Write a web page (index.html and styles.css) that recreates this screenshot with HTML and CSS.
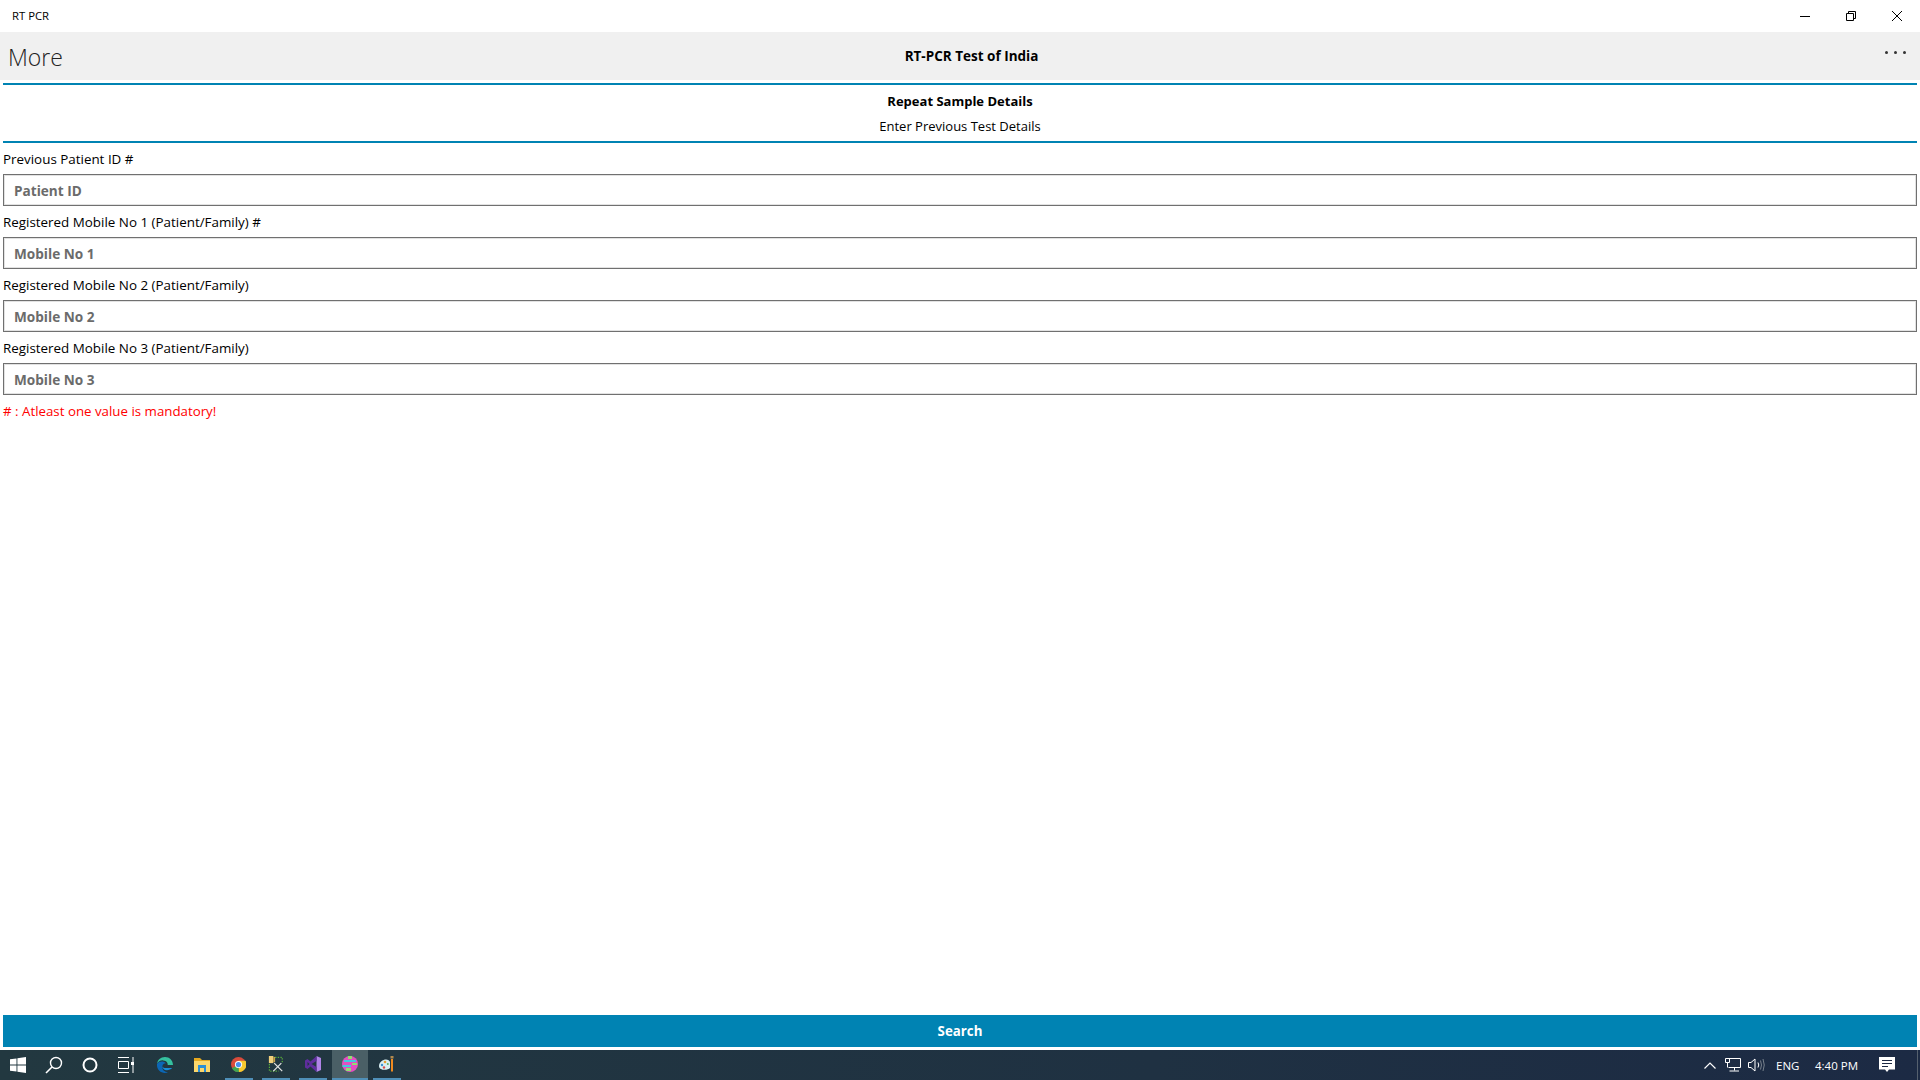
FILE: index.html
```html
<!DOCTYPE html>
<html lang="en">
<head>
    <meta charset="UTF-8">
    <title>RT PCR</title>
    <link rel="stylesheet" href="styles.css">
</head>
<body>
    <div class="window">
        <div class="title-bar">
            <span class="app-name">RT PCR</span>
            <div class="window-controls">
                <div class="window-btn">
                    <svg width="10" height="10" viewBox="0 0 10 10"><path d="M0 5.5H10" stroke="#000" fill="none"/></svg>
                </div>
                <div class="window-btn">
                    <svg width="10" height="10" viewBox="0 0 10 10"><path d="M.5 2.5H7.5V9.5H.5ZM2.5 2.5V.5H9.5V7.5H7.5" stroke="#000" fill="none"/></svg>
                </div>
                <div class="window-btn">
                    <svg width="10" height="10" viewBox="0 0 10 10"><path d="M0 0L10 10M10 0L0 10" stroke="#000" fill="none"/></svg>
                </div>
            </div>
        </div>

        <div class="command-bar">
            <div class="page-name">More</div>
            <div class="app-title">RT-PCR Test of India</div>
            <div class="more-dots"><i></i><i></i><i></i></div>
        </div>

        <div class="content">
            <div class="section-head">
                <div class="section-title">Repeat Sample Details</div>
                <div class="section-sub">Enter Previous Test Details</div>
            </div>

            <div class="form-group">
                <label for="patientId">Previous Patient ID #</label>
                <input type="text" id="patientId" placeholder="Patient ID">
            </div>
            <div class="form-group">
                <label for="mobile1">Registered Mobile No 1 (Patient/Family) #</label>
                <input type="text" id="mobile1" placeholder="Mobile No 1">
            </div>
            <div class="form-group">
                <label for="mobile2">Registered Mobile No 2 (Patient/Family)</label>
                <input type="text" id="mobile2" placeholder="Mobile No 2">
            </div>
            <div class="form-group">
                <label for="mobile3">Registered Mobile No 3 (Patient/Family)</label>
                <input type="text" id="mobile3" placeholder="Mobile No 3">
            </div>
            <div class="form-note"># : Atleast one value is mandatory!</div>

            <button class="search-btn">Search</button>
        </div>

        <div class="taskbar">
            <div class="task-icon">
                <svg width="16" height="16" viewBox="0 0 16 16"><path d="M0 2.3L6.5 1.4V7.6H0ZM7.4 1.2L16 0V7.6H7.4ZM0 8.4H6.5V14.6L0 13.7ZM7.4 8.4H16V16L7.4 14.8Z" fill="#fff"/></svg>
            </div>
            <div class="task-icon">
                <svg width="18" height="18" viewBox="0 0 18 18"><circle cx="11" cy="7" r="5.5" stroke="#fff" stroke-width="1.4" fill="none"/><path d="M7 11L1 17" stroke="#fff" stroke-width="1.6"/></svg>
            </div>
            <div class="task-icon">
                <svg width="16" height="16" viewBox="0 0 16 16"><circle cx="8" cy="8" r="6.5" stroke="#fff" stroke-width="2" fill="none"/></svg>
            </div>
            <div class="task-icon">
                <svg width="16" height="16" viewBox="0 0 16 16"><path d="M0 .5H11M0 15.5H11M.5 4.5H10.5V11.5H.5ZM15 0V16" stroke="#fff" fill="none"/><rect x="13" y="5" width="3" height="3" fill="#fff"/></svg>
            </div>
            <div class="task-icon pinned first-pinned">
                <svg width="16" height="16" viewBox="0 0 18 18">
                    <path d="M9 0C4 0 .5 3.500 0 8C1 5 4 3.500 7 3.800C11 4 12.500 7 12 9H18C18 4 14 0 9 0Z" fill="#35c1a0"/>
                    <path d="M0 8C-.5 13 3 18 9 18C10.500 18 12 17.600 13 17C9 17.500 5.500 14.500 6 10.500C6.300 8 8 7 10 7C8 4.500 2 4 0 8Z" fill="#0c67b5"/>
                    <path d="M6 10.500C6 13 8 15 11 15C13.500 15 15.500 14 17 12.500H10C8 12.500 6.500 12 6 10.500Z" fill="#1a8ed8"/>
                </svg>
            </div>
            <div class="task-icon pinned">
                <svg width="16" height="14" viewBox="0 0 16 14">
                    <path d="M0 0H6L8 2H16V14H0Z" fill="#e6a91f"/>
                    <path d="M0 3H16V14H0Z" fill="#fcd76b"/>
                    <path d="M4 7H12V14H10V10H6V14H4Z" fill="#2b8fd6"/>
                </svg>
            </div>
            <div class="task-icon running">
                <svg width="15" height="15" viewBox="0 0 16 16">
                    <circle cx="8" cy="8" r="8" fill="#d94b3b"/>
                    <path d="M8 8L1 12A8 8 0 0 0 8.500 16Z" fill="#3fa652"/>
                    <path d="M8 4H15.500A8 8 0 0 1 8.500 16Z" fill="#f6c92f"/>
                    <circle cx="8" cy="8" r="3.800" fill="#fff"/>
                    <circle cx="8" cy="8" r="2.800" fill="#4a8ef0"/>
                </svg>
            </div>
            <div class="task-icon running">
                <svg width="16" height="16" viewBox="0 0 18 18">
                    <rect x="1" y="0" width="5" height="8" fill="#f1cf7a"/>
                    <rect x="6" y="1" width="2" height="6" fill="#c9a24a"/>
                    <path d="M1.500 9V17H12M8 1.500H16V8" stroke="#6fdc3a" stroke-dasharray="1.500 1.500" fill="none"/>
                    <path d="M7 8L16 17M15 8L6 17" stroke="#e4e4e4" stroke-width="1.400"/>
                </svg>
            </div>
            <div class="task-icon running">
                <svg width="16" height="16" viewBox="0 0 16 16">
                    <path d="M11.500 0L16 2V14L11.500 16Z" fill="#b083e8"/>
                    <path d="M11.500 0V5L6.500 8L11.500 11V16L5.500 10.500L2.500 13L0 11.500V4.500L2.500 3L5.500 5.500ZM2.500 6V10L4.500 8Z" fill="#5f2d9e"/>
                </svg>
            </div>
            <div class="task-icon running active">
                <svg width="16" height="16" viewBox="0 0 16 16">
                    <circle cx="8" cy="8" r="8" fill="#e34fc0"/>
                    <path d="M2 4H14V6H2ZM.5 9H9V11H.5Z" fill="#44c8e0"/>
                    <path d="M6 0H10V3H6ZM10 7H15V9H10ZM4 12H9V15H4Z" fill="#8ee070"/>
                </svg>
            </div>
            <div class="task-icon running">
                <svg width="16" height="16" viewBox="0 0 16 16">
                    <path d="M0 10C0 6 4 3.500 7 3.500C9 3.500 10.500 4.500 11 6V12C9 14.500 0 15 0 10Z" fill="#d8eef2"/>
                    <circle cx="3" cy="9" r="1.200" fill="#3a8fd0"/>
                    <circle cx="6" cy="6" r="1.300" fill="#e8a030"/>
                    <circle cx="5" cy="11.500" r="1.200" fill="#d84a4a"/>
                    <circle cx="8.800" cy="8" r="1" fill="#55b060"/>
                    <path d="M12 3H14V15L13 16L12 15Z" fill="#ef8a1f"/>
                    <path d="M11.500 0H14.500V2.500H11.500Z" fill="#b08a50"/>
                </svg>
            </div>

            <div class="tray">
                <svg class="tray-chevron" width="12" height="7" viewBox="0 0 12 7"><path d="M.5 6.500L6 1L11.500 6.500" stroke="#fff" stroke-width="1.200" fill="none"/></svg>
                <svg class="tray-net" width="16" height="14" viewBox="0 0 16 14"><path d="M3.500 .5H15.500V9.500H3.500M9.500 9.500V12.500M4.500 13H14M.5 .5H4.500V4.500H.5ZM2.500 4.500V9.500" stroke="#fff" fill="none"/></svg>
                <svg class="tray-vol" width="17" height="14" viewBox="0 0 17 14"><path d="M.5 4.500H3L7 1V13L3 9.500H.5Z" stroke="#fff" fill="none"/><path d="M10 4.500Q11.500 7 10 9.500" stroke="#fff" fill="none"/><path d="M12.500 2.500Q14.500 7 12.500 11.500M15 1Q17.500 7 15 13" stroke="#78818c" fill="none"/></svg>
                <span class="tray-lang">ENG</span>
                <span class="tray-time">4:40 PM</span>
                <svg class="tray-note" width="16" height="16" viewBox="0 0 16 16"><path d="M0 0H16V12.500H10L8 15L6 12.500H0Z" fill="#fff"/><path d="M3 3.500H13M3 6.500H13M3 9.500H9" stroke="#1c2a44"/></svg>
                <div class="show-desktop"></div>
            </div>
        </div>
    </div>
</body>
</html>
```

FILE: styles.css
```css
* {
    margin: 0;
    padding: 0;
    box-sizing: border-box;
}

body {
    font-family: 'Open Sans', 'Noto Sans', sans-serif;
    background: #fff;
    color: #000;
}

.window {
    display: flex;
    flex-direction: column;
    height: 100vh;
    overflow: hidden;
}

.title-bar {
    display: flex;
    align-items: center;
    justify-content: space-between;
    height: 32px;
    flex: none;
    padding-left: 12px;
}

.app-name {
    font-size: 11.3px;
    padding-bottom: 1px;
}

.window-controls {
    display: flex;
}

.window-btn {
    display: flex;
    width: 46px;
    height: 32px;
    align-items: center;
    justify-content: center;
}

.command-bar {
    display: flex;
    align-items: center;
    height: 48px;
    flex: none;
    background: #f0f0f0;
}

.page-name {
    width: 72px;
    padding-left: 8px;
    padding-top: 2px;
    font-size: 23px;
    font-weight: 300;
    color: #222;
}

.app-title {
    flex: 1;
    text-align: center;
    font-size: 13.5px;
    font-weight: 700;
    padding-bottom: 1px;
}

.more-dots {
    display: flex;
    width: 49px;
    gap: 6px;
    padding-left: 14px;
    padding-bottom: 7px;
}

.more-dots i {
    width: 3px;
    height: 3px;
    background: #333;
    border-radius: 50%;
}

.content {
    display: flex;
    flex-direction: column;
    flex: 1;
    padding: 3px 3px 3px;
}

.section-head {
    height: 60px;
    flex: none;
    border-top: 2px solid #0083b3;
    border-bottom: 2px solid #0083b3;
    text-align: center;
    font-size: 13px;
}

.section-title {
    font-weight: 700;
    line-height: 18px;
    margin-top: 7px;
}

.section-sub {
    line-height: 18px;
    margin-top: 7px;
}

.form-group {
    display: flex;
    flex-direction: column;
    height: 63px;
    flex: none;
}

.form-group label {
    height: 31px;
    line-height: 33px;
    font-size: 13.4px;
}

.form-group input {
    height: 32px;
    border: 1px solid #707070;
    box-shadow: inset 0 0 0 1px rgba(112, 112, 112, 0.2);
    padding: 1px 10px 0;
    font-family: inherit;
    font-size: 13.6px;
    font-weight: 700;
    outline: none;
}

.form-group input::placeholder {
    color: #6b6b6b;
    opacity: 1;
}

.form-note {
    line-height: 32px;
    font-size: 13.3px;
    color: #f00;
}

.search-btn {
    margin-top: auto;
    height: 32px;
    border: none;
    background: #0083b3;
    color: #fff;
    font-family: inherit;
    font-size: 13.3px;
    font-weight: 700;
}

.taskbar {
    display: flex;
    height: 30px;
    flex: none;
    background: linear-gradient(90deg, #223840 0%, #1f3142 60%, #1c2a44 100%);
}

.task-icon {
    display: flex;
    width: 36px;
    height: 30px;
    flex: none;
    align-items: center;
    justify-content: center;
}

.task-icon.pinned {
    width: 37px;
}

.task-icon.first-pinned {
    margin-left: 2px;
}

.task-icon.running {
    width: 28px;
    margin: 0 4.5px;
    border-bottom: 2px solid #4f8fb8;
}

.task-icon.active {
    width: 36px;
    margin: 0 0.5px;
    background: #4a5f66;
}

.tray {
    display: flex;
    align-items: center;
    margin-left: auto;
    color: #fff;
    font-size: 11.5px;
}

.tray-chevron {
    margin-right: 9px;
}

.tray-net {
    margin-right: 7px;
}

.tray-lang {
    margin-left: 11px;
    width: 39px;
}

.tray-time {
    width: 62px;
}

.tray-note {
    margin-left: 2px;
}

.show-desktop {
    width: 1px;
    height: 30px;
    margin-left: 22px;
    margin-right: 2px;
    background: #55606e;
}
```
